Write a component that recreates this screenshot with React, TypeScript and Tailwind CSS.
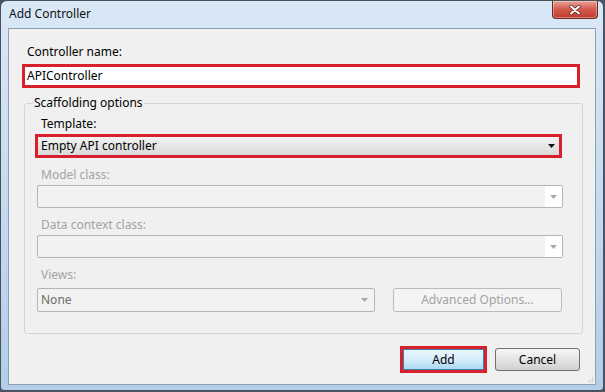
const font = "font-['Segoe_UI','Noto_Sans',sans-serif] text-[12px]";

function Arrow({ dim }: { dim?: boolean }) {
  return (
    <svg width="7" height="4" viewBox="0 0 7 4" className="shrink-0">
      <path d="M0 0h7L3.5 4z" fill={dim ? "#a8a8a8" : "#111"} />
    </svg>
  );
}

function DisabledCombo() {
  return (
    <div className="ml-[2px] flex h-[23px] w-[526px] items-stretch rounded-[2px] border border-[#b5b5b5] bg-[#f2f2f2]">
      <div className="flex-1" />
      <div className="flex w-[17px] items-center justify-center bg-white">
        <Arrow dim />
      </div>
    </div>
  );
}

export default function App() {
  return (
    <div className={`${font} h-[392px] w-[605px] overflow-hidden bg-[#4c5566] text-black`}>
      <div className="flex h-[391px] w-[604px] flex-col rounded-t-[7px] rounded-b-[4px] border border-[#4a5058] bg-gradient-to-b from-[#d9e8f7] via-[#c6dbf0] to-[#b3cde9] px-[7px] pb-[5px]">
        {/* title bar */}
        <div className="flex h-[27px] items-start justify-between">
          <span className="mt-[5px] pl-[1px] leading-[16px] text-[#111]">Add Controller</span>
          <div className="mr-[-2px] flex h-[18px] w-[46px] items-center justify-center rounded-b-[4px] border border-t-0 border-[#6b2a24] bg-gradient-to-b from-[#e8a197] via-[#d1594b] to-[#c0392b] shadow-[inset_0_0_0_1px_rgba(255,255,255,0.35)]">
            <svg width="12" height="10" viewBox="0 0 12 10">
              <path d="M2 1.5l8 7M10 1.5l-8 7" stroke="#5a1f1a" strokeWidth="3.4" strokeLinecap="round" />
              <path d="M2 1.5l8 7M10 1.5l-8 7" stroke="#fff" strokeWidth="2" strokeLinecap="round" />
            </svg>
          </div>
        </div>

        {/* client area */}
        <div className="relative flex flex-1 flex-col border border-[#8e9fb3] bg-[#f0f0f0] pl-[13px] pr-[15px]">
          <label className="ml-[5px] mt-[15px] leading-[16px]">Controller name:</label>
          <div className="mt-[4px] flex h-[24px] w-[558px] items-center border-[3px] border-[#d8202c] bg-white pl-[2px] leading-[16px]">
            APIController
          </div>

          <fieldset className="ml-[2px] mt-[7px] w-[559px] rounded-[3px] border border-[#d5d5d5] pb-[21px] pl-[10px]">
            <legend className="-ml-[2px] px-[1px] leading-[16px]">Scaffolding options</legend>
            <div className="flex flex-col">
              <span className="ml-[6px] mt-[5px] leading-[16px]">Template:</span>
              <div className="mt-[2px] h-[24px] w-[527px] border-[3px] border-[#d8202c]">
                <div className="flex h-full items-center justify-between bg-gradient-to-b from-[#f3f3f3] to-[#d9d9d9] pl-[3px] pr-[4px] leading-[16px]">
                  <span>Empty API controller</span>
                  <Arrow />
                </div>
              </div>

              <span className="ml-[6px] mt-[9px] leading-[16px] text-[#a3a3a3]">Model class:</span>
              <div className="mt-[2px]">
                <DisabledCombo />
              </div>

              <span className="ml-[6px] mt-[9px] leading-[16px] text-[#a3a3a3]">Data context class:</span>
              <div className="mt-[2px]">
                <DisabledCombo />
              </div>

              <span className="ml-[6px] mt-[9px] leading-[16px] text-[#a3a3a3]">Views:</span>
              <div className="ml-[2px] mt-[5px] flex gap-[18px]">
                <div className="flex h-[24px] w-[338px] items-center justify-between rounded-[2px] border border-[#b5b5b5] bg-[#f2f2f2] pl-[3px] pr-[6px] leading-[16px] text-[#6d6d6d]">
                  <span>None</span>
                  <Arrow dim />
                </div>
                <div className="flex h-[24px] w-[169px] items-center justify-center rounded-[3px] border border-[#b9bcbf] bg-[#f4f4f4] leading-[16px] text-[#a3a3a3]">
                  Advanced Options...
                </div>
              </div>
            </div>
          </fieldset>

          <div className="mt-[12px] flex justify-end gap-[8px]">
            <div className="h-[27px] w-[87px] border-[3px] border-[#d8202c]">
              <div className="flex h-full items-center justify-center border border-[#3c7fb1] bg-gradient-to-b from-[#e8f5fc] via-[#d6edfa] to-[#a9d9f2] leading-[16px]">
                Add
              </div>
            </div>
            <div className="mt-[2px] flex h-[23px] w-[85px] items-center justify-center rounded-[3px] border border-[#707070] bg-gradient-to-b from-[#f6f6f6] via-[#e5e5e5] to-[#cfcfcf] leading-[16px]">
              Cancel
            </div>
          </div>

          <div className="absolute bottom-[2px] right-[2px] grid grid-cols-3 gap-[1px] opacity-60">
            {[0, 0, 1, 0, 1, 1, 1, 1, 1].map((v, i) => (
              <span key={i} className={v ? "h-[1px] w-[1px] bg-[#888]" : "h-[1px] w-[1px]"} />
            ))}
          </div>
        </div>
      </div>
    </div>
  );
}
